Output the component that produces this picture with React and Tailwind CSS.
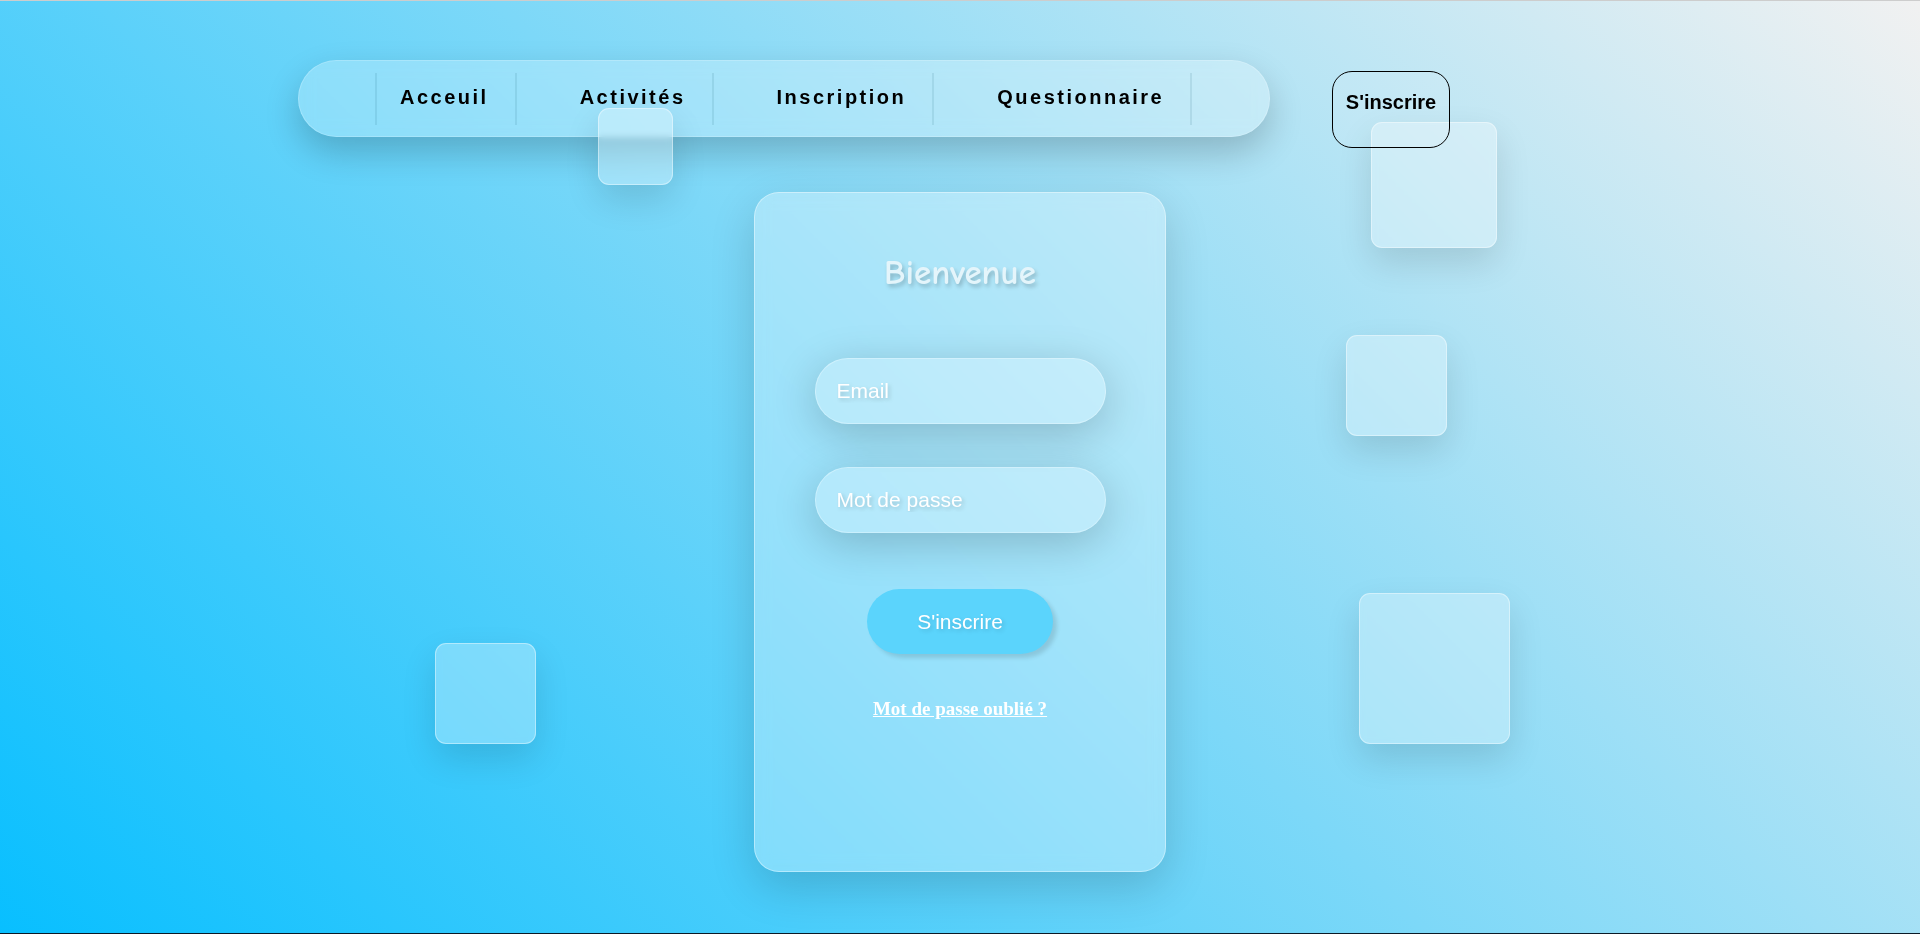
import React from 'react';

const NAV_LINKS = ['Acceuil', 'Activités', 'Inscription', 'Questionnaire'];

// decorative glass squares floating on the page
const SQUARES = [
  'left-[598px] top-[107px] w-[75px] h-[77px]',
  'left-[1371px] top-[121px] w-[126px] h-[126px]',
  'left-[1346px] top-[334px] w-[101px] h-[101px]',
  'left-[1359px] top-[592px] w-[151px] h-[151px]',
  'left-[435px] top-[642px] w-[101px] h-[101px]',
];

const Sep = () => <div className="w-[2px] h-[52px] bg-[#0a4a66]/10" />;

const NavBar = () => (
  <nav className="ml-[298px] w-[972px] h-[77px] rounded-full bg-white/25 border border-white/20 shadow-[0_15px_35px_rgba(0,0,0,0.2)] backdrop-blur-sm flex items-center pl-[76px]">
    <Sep />
    {NAV_LINKS.map((l, i) => (
      <React.Fragment key={l}>
        <a className={`${i === 0 ? 'pl-[23px]' : 'pl-[63px]'} pr-[26px] pb-[2px] text-[20px] leading-[23px] font-bold tracking-[2.5px] text-black font-['Liberation_Sans',Arial,sans-serif]`}>{l}</a>
        <Sep />
      </React.Fragment>
    ))}
  </nav>
);

const Field = ({ placeholder, type }) => (
  <input type={type} placeholder={placeholder}
    className="w-[291px] h-[66px] rounded-full bg-white/25 border border-white/30 px-[21px] text-[21px] text-white placeholder:text-white outline-none shadow-[0_10px_45px_rgba(0,0,0,0.2)] [text-shadow:2px_2px_4px_rgba(0,0,0,0.18)] font-['Liberation_Sans',Arial,sans-serif]" />
);

export default function App() {
  return (
    <div className="relative w-full h-[934px] overflow-hidden border-t border-t-[#cdcdcd] border-b border-b-[#0c1a26] bg-[linear-gradient(45deg,#08bfff,#f1f1f1)] font-['Liberation_Sans',Arial,sans-serif]">
      {SQUARES.map((s, i) => (
        <div key={i} className={`absolute z-10 ${s} rounded-[11px] bg-white/30 border border-white/40 backdrop-blur-[3px] shadow-[0_15px_35px_rgba(0,0,0,0.12)]`} />
      ))}

      <div className="flex items-start pt-[59px]">
        <NavBar />
        <button className="relative z-20 ml-[62px] mt-[11px] w-[118px] h-[77px] rounded-[20px] border border-black bg-white/10 pb-[16px] text-[20px] font-bold text-black">
          S'inscrire
        </button>
      </div>

      <div className="mx-auto mt-[44px] w-[412px] h-[680px] rounded-[25px] border border-white/40 bg-white/30 backdrop-blur-sm shadow-[0_15px_45px_rgba(0,0,0,0.16)] flex flex-col items-center">
        <h2 className="mt-[60px] text-[35px] leading-[40px] font-bold text-[#e4f5fb] [text-shadow:2px_3px_4px_rgba(0,0,0,0.22)] font-['Comic_Sans_MS','Comic_Neue',cursive]">Bienvenue</h2>
        <div className="mt-[65px] flex flex-col gap-[43px]">
          <Field placeholder="Email" type="email" />
          <Field placeholder="Mot de passe" type="password" />
        </div>
        <button className="mt-[56px] w-[186px] h-[65px] rounded-full bg-[#5bd4fc] text-white text-[21px] shadow-[4px_4px_4px_rgba(0,0,0,0.12)] [text-shadow:2px_2px_4px_rgba(0,0,0,0.15)]">
          S'inscrire
        </button>
        <a className="mt-[41px] text-[19px] font-bold text-white underline font-['Liberation_Serif','Times_New_Roman',serif]">Mot de passe oublié ?</a>
      </div>
    </div>
  );
}
